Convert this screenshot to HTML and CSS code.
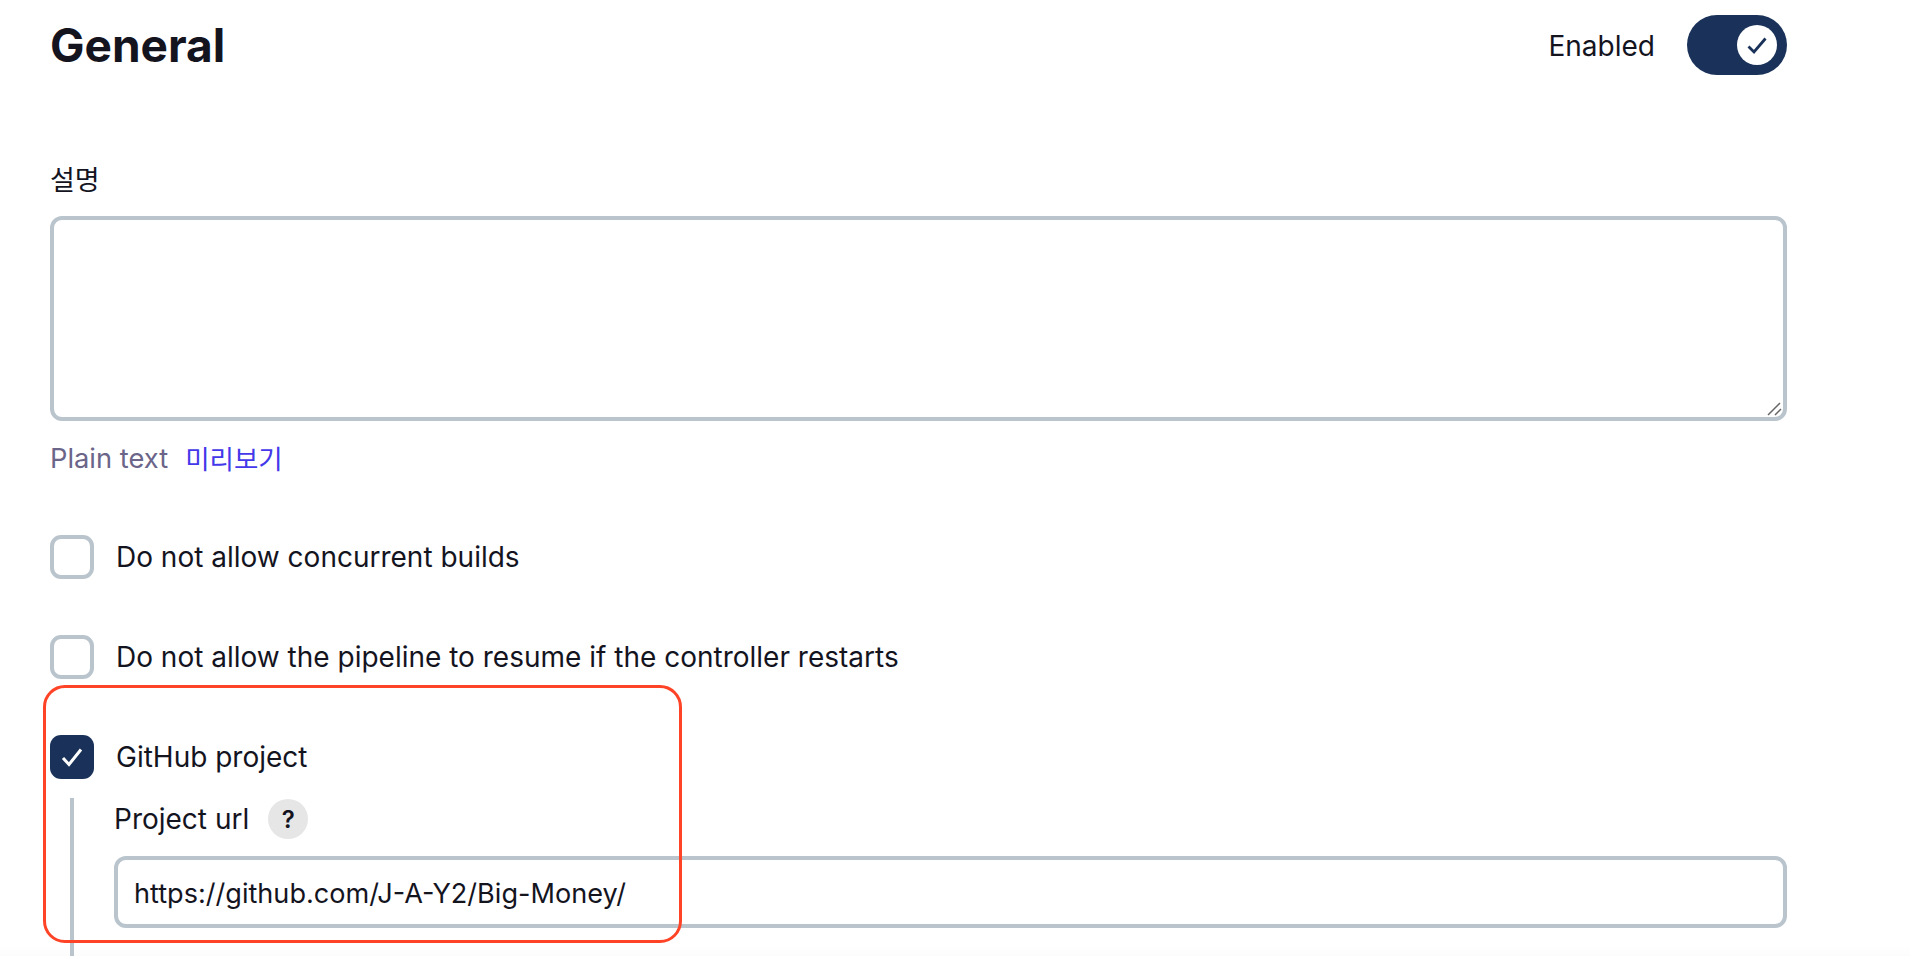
FILE: index.html
```html
<!DOCTYPE html>
<html lang="en">
<head>
    <meta charset="UTF-8">
    <meta name="viewport" content="width=device-width, initial-scale=1.0">
    <title>General</title>
    <link rel="stylesheet" href="styles.css">
</head>
<body>

    <div class="page">
        <div class="section-header">
            <h1 class="title">General</h1>
            <div class="enable">
                <span class="enable-text">Enabled</span>
                <span class="toggle">
                    <span class="knob">
                        <svg width="20" height="20" viewBox="0 0 20 20"><path d="M1.5 11.5 L7 17 L18.5 3.5" fill="none" stroke="#1a3259" stroke-width="2.8"/></svg>
                    </span>
                </span>
            </div>
        </div>

        <label class="field-label">설명</label>
        <div class="textarea-wrap">
            <textarea class="description"></textarea>
            <svg class="grip" width="16" height="16" viewBox="0 0 16 16"><path d="M1 14 L13 2 M8 14 L14 8" stroke="#666" stroke-width="1.5" fill="none"/></svg>
        </div>
        <div class="format-row">
            <span class="plain">Plain text</span>
            <a class="preview" href="#">미리보기</a>
        </div>

        <div class="check-row first">
            <span class="box"></span>
            <span>Do not allow concurrent builds</span>
        </div>
        <div class="check-row">
            <span class="box"></span>
            <span>Do not allow the pipeline to resume if the controller restarts</span>
        </div>
        <div class="check-row">
            <span class="box checked">
                <svg width="24" height="24" viewBox="0 0 24 24"><path d="M3 13 L9 19.5 L21 4.5" fill="none" stroke="#fff" stroke-width="3"/></svg>
            </span>
            <span>GitHub project</span>
        </div>

        <div class="nested">
            <div class="url-label">
                <span>Project url</span>
                <span class="help">?</span>
            </div>
            <input type="text" class="url-input" value="https://github.com/J-A-Y2/Big-Money/" readonly>
        </div>
    </div>

    <div class="highlight"></div>

</body>
</html>
```

FILE: styles.css
```css
html, body {
    margin: 0;
    height: 956px;
    overflow: hidden;
}

body {
    position: relative;
    background: linear-gradient(#fff 945px, #fcfcfc);
    color: #14141f;
    font-family: Inter, "Noto Sans CJK KR", sans-serif;
    font-size: 28px;
}

.page {
    padding: 0 123px 0 50px;
}

.section-header {
    display: flex;
    justify-content: space-between;
    align-items: center;
    height: 90px;
}

.title {
    margin: 0;
    font-size: 46px;
    font-weight: 700;
    line-height: 90px;
}

.enable {
    display: flex;
    align-items: center;
    gap: 32px;
}

.enable-text {
    padding-top: 2px;
}

.toggle {
    display: flex;
    justify-content: flex-end;
    align-items: center;
    width: 100px;
    height: 60px;
    padding-right: 10px;
    box-sizing: border-box;
    border-radius: 30px;
    background-color: #1a3259;
}

.knob {
    display: flex;
    justify-content: center;
    align-items: center;
    width: 40px;
    height: 40px;
    border-radius: 50%;
    background-color: #fff;
}

.field-label {
    display: block;
    margin: 70px 0 14px;
    font-size: 27px;
    line-height: 42px;
}

.textarea-wrap {
    position: relative;
    height: 205px;
}

.description {
    display: block;
    width: 100%;
    height: 100%;
    box-sizing: border-box;
    border: 4px solid #b9c4cc;
    border-radius: 12px;
    background-color: #fff;
    resize: none;
    outline: none;
}

.grip {
    position: absolute;
    right: 4px;
    bottom: 4px;
}

.format-row {
    display: flex;
    gap: 17px;
    margin-top: 20px;
    font-size: 27.3px;
    line-height: 36px;
}

.plain {
    color: #6b6589;
}

.preview {
    color: #4338ea;
    font-size: 26.5px;
    text-decoration: none;
}

.check-row {
    display: flex;
    align-items: center;
    gap: 22px;
    height: 44px;
    margin-top: 56px;
}

.check-row.first {
    margin-top: 58px;
}

.box {
    display: flex;
    justify-content: center;
    align-items: center;
    width: 44px;
    height: 44px;
    box-sizing: border-box;
    border: 4px solid #b9c4cc;
    border-radius: 11px;
}

.box.checked {
    border: none;
    background-color: #1a3259;
}

.nested {
    margin: 19px 0 0 20px;
    padding: 0 0 40px 40px;
    border-left: 4px solid #b9c4cc;
}

.url-label {
    display: flex;
    align-items: center;
    gap: 19px;
    height: 40px;
    padding-top: 2px;
    box-sizing: border-box;
}

.help {
    display: flex;
    flex-shrink: 0;
    justify-content: center;
    align-items: center;
    width: 40px;
    height: 40px;
    border-radius: 50%;
    background-color: #e6e6e6;
    font-size: 24px;
    font-weight: 600;
}

.url-input {
    display: block;
    width: 100%;
    height: 72px;
    box-sizing: border-box;
    margin-top: 18px;
    padding: 2px 16px 0;
    border: 4px solid #b9c4cc;
    border-radius: 12px;
    color: #14141f;
    font-family: Inter, sans-serif;
    font-size: 27.1px;
    outline: none;
}

.highlight {
    position: absolute;
    left: 43px;
    top: 685px;
    width: 639px;
    height: 258px;
    box-sizing: border-box;
    border: 3px solid #ff4326;
    border-radius: 22px;
}
```
